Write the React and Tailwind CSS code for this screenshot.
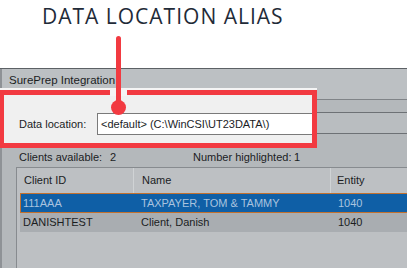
const RED = 'bg-[#f23a41]';

const ROWS = [
  { id: '111AAA', name: 'TAXPAYER, TOM & TAMMY', entity: '1040', selected: true },
  { id: 'DANISHTEST', name: 'Client, Danish', entity: '1040', selected: false },
];

export default function App() {
  return (
    <div className="relative w-[407px] h-[268px] overflow-hidden bg-white font-['Liberation_Sans',Arial,sans-serif] text-[11px] leading-none text-[#1b1d1f]">
      {/* caption */}
      <div className="h-[68px] pl-[42px] pt-[6px]">
        <h1 className="font-['Open_Sans',sans-serif] text-[21px] leading-[21px] tracking-[1px] text-[#1f2b38]">
          DATA LOCATION ALIAS
        </h1>
      </div>

      {/* dimmed window */}
      <div className="h-[200px] flex flex-col border-t border-[#5c6165] bg-[#b4b8bb]">
        {/* tab strip */}
        <div className="h-[19px] bg-[#bcc0c3] border-l-2 border-[#8e9296] pl-[7px] flex items-end pb-[2px] text-[11.5px]">
          SurePrep Integration
        </div>

        {/* data location row */}
        <div className="h-[60px] flex">
          <div className="w-[317px] flex flex-col border-t-2 border-[#f4f4f4]">
            <div className="flex-1 border-[5px] border-l-4 border-[#f23a41] bg-[#f0f0f0] flex pt-[18px] pl-[15px] overflow-hidden">
              <span className="w-[78px] h-[22px] flex items-center shrink-0">Data location:</span>
              <div className="flex-1 h-[22px] bg-white border-y border-l border-[#7a7a7a] flex items-center pl-[3px] whitespace-nowrap">
                &lt;default&gt; (C:\WinCSI\UT23DATA\)
              </div>
            </div>
          </div>
          <div className="flex-1 flex flex-col">
            <div className="h-[12px] bg-[#bcc0c3] border-b border-[#808488]" />
            <div className="mt-[12px] h-[22px] border-y border-[#6d7175] bg-[#b9bdc0]" />
          </div>
        </div>

        {/* counts */}
        <div className="h-[19px] flex items-center pl-[17px] border-l-2 border-[#8e9296]">
          <span className="w-[91px]">Clients available:</span>
          <span className="w-[83px]">2</span>
          <span className="w-[101px]">Number highlighted:</span>
          <span>1</span>
        </div>

        {/* client list */}
        <div className="flex-1 flex border-l-2 border-[#8e9296]">
          <div className="ml-[14px] flex-1 border-l border-t border-[#878b8f] bg-[#bdc0c3] flex flex-col">
            <div className="h-[25px] flex items-center">
              <div className="w-[117px] h-full flex items-center pl-[7px] border-r border-[#d0d3d5]">Client ID</div>
              <div className="w-[197px] h-full flex items-center pl-[8px] border-r border-[#d0d3d5]">Name</div>
              <div className="flex-1 h-full flex items-center pl-[6px]">Entity</div>
            </div>
            {ROWS.map((r) =>
              r.selected ? (
                <div key={r.id} className="ml-[3px] h-[20px] flex items-center bg-[#0f5fa6] border border-r-0 border-[#c2712f] text-[#a9c3df]">
                  <span className="w-[113px] pl-[2px]">{r.id}</span>
                  <span className="w-[197px] pl-[7px]">{r.name}</span>
                  <span className="pl-[7px]">{r.entity}</span>
                </div>
              ) : (
                <div key={r.id} className="ml-[3px] h-[19px] flex items-center bg-[#a9adb1]">
                  <span className="w-[114px] pl-[3px]">{r.id}</span>
                  <span className="w-[197px] pl-[7px]">{r.name}</span>
                  <span className="pl-[7px]">{r.entity}</span>
                </div>
              )
            )}
          </div>
        </div>
      </div>

      {/* callout pointer */}
      <div className="absolute left-[110px] top-[89px] w-[17px] h-[7px] bg-[#f4f4f4]" />
      <div className={`absolute left-[116px] top-[36px] w-[5px] h-[72px] rounded-full ${RED}`} />
      <div className={`absolute left-[111px] top-[100px] w-[15px] h-[15px] rounded-full ${RED}`} />
    </div>
  );
}
